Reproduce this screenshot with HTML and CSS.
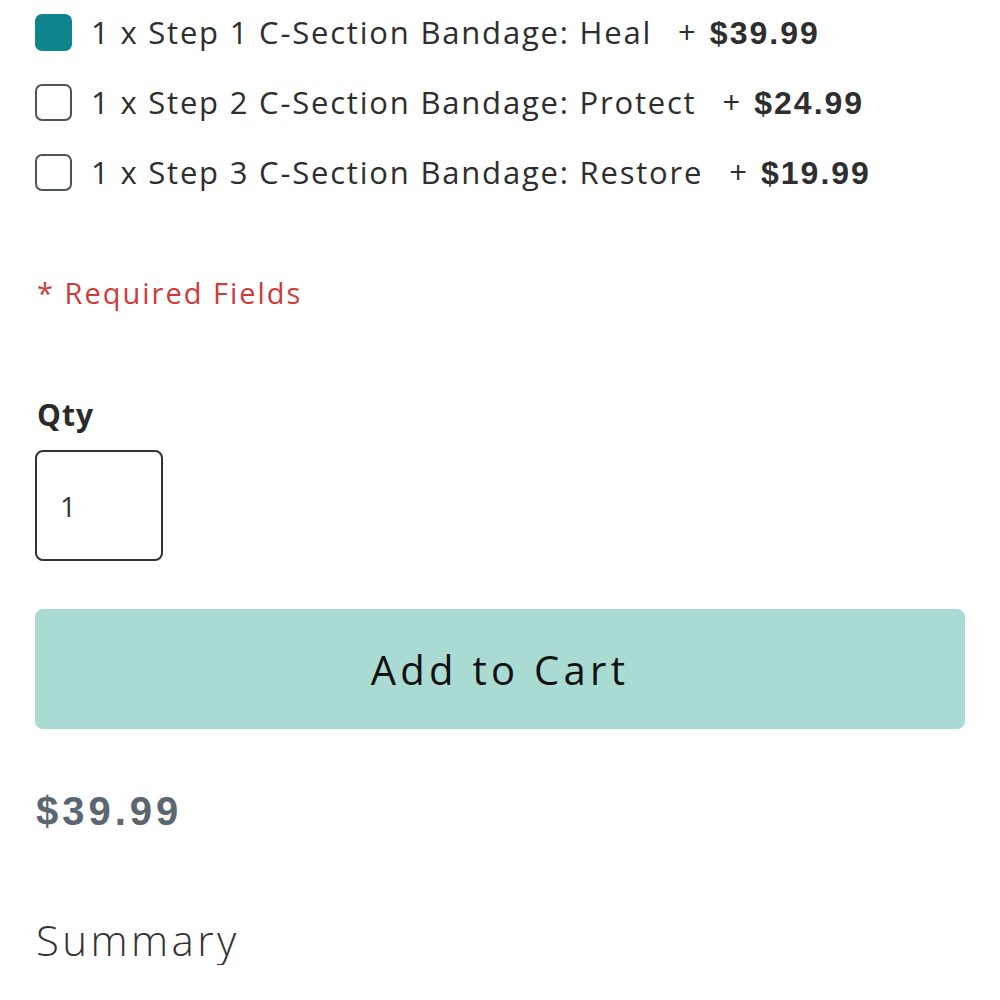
FILE: index.html
```html
<!DOCTYPE html>
<html>
<head>
<meta charset="utf-8">
<link rel="stylesheet" href="styles.css">
</head>
<body>
<div class="page">
  <div class="options">
    <label class="opt"><span class="box checked"></span><span class="opt-text">1 x Step 1 C-Section Bandage: Heal</span><span class="opt-price">+ <b>$39.99</b></span></label>
    <label class="opt"><span class="box"></span><span class="opt-text">1 x Step 2 C-Section Bandage: Protect</span><span class="opt-price">+ <b>$24.99</b></span></label>
    <label class="opt"><span class="box"></span><span class="opt-text">1 x Step 3 C-Section Bandage: Restore</span><span class="opt-price">+ <b>$19.99</b></span></label>
  </div>
  <div class="required">* Required Fields</div>
  <div class="qty-label">Qty</div>
  <div class="qty-input">1</div>
  <button class="add-btn">Add to Cart</button>
  <div class="price">$39.99</div>
  <div class="summary">Summary</div>
</div>
</body>
</html>
```
FILE: styles.css
```css
html, body {
  margin: 0;
  padding: 0;
  background: #ffffff;
}
body {
  font-family: "Open Sans", "Noto Sans", sans-serif;
  color: #333333;
}
.page {
  padding: 0 35px;
  display: flex;
  flex-direction: column;
  align-items: flex-start;
}
.options {
  display: flex;
  flex-direction: column;
  gap: 6px;
}
.opt {
  height: 64px;
  display: flex;
  align-items: center;
  font-size: 31px;
  letter-spacing: 1.8px;
  color: #2e2e2e;
  white-space: nowrap;
}
.box {
  width: 33px;
  height: 33px;
  border: 2px solid #4d5359;
  border-radius: 7px;
  margin-right: 19px;
  flex: none;
}
.box.checked {
  background: #0f858d;
  border-color: #0f858d;
}
.opt-price {
  margin-left: 26px;
  letter-spacing: 0;
  word-spacing: 6px;
}
.opt-price b {
  font-family: "Liberation Sans", Arial, sans-serif;
  font-weight: 700;
  font-size: 32px;
  letter-spacing: 2px;
  word-spacing: 0;
}
.required {
  margin-top: 69px;
  height: 40px;
  line-height: 40px;
  font-size: 29px;
  letter-spacing: 2px;
  color: #cf3b3a;
  padding-left: 2px;
}
.qty-label {
  margin-top: 82px;
  height: 40px;
  line-height: 40px;
  font-size: 30px;
  font-weight: 700;
  letter-spacing: 1px;
  color: #2a2a2a;
  padding-left: 2px;
}
.qty-input {
  margin-top: 15px;
  width: 124px;
  height: 107px;
  border: 2px solid #2f3338;
  border-radius: 8px;
  box-sizing: content-box;
  display: flex;
  align-items: center;
  font-size: 28px;
  color: #333;
  text-indent: 23px;
}
.add-btn {
  margin-top: 48px;
  width: 930px;
  height: 120px;
  border: none;
  border-radius: 8px;
  background: #a9dbd3;
  font-family: "Open Sans", "Noto Sans", sans-serif;
  font-size: 40px;
  color: #111111;
  letter-spacing: 4.3px;
  padding: 0;
}
.price {
  margin-top: 57px;
  height: 50px;
  line-height: 50px;
  font-family: "Liberation Sans", Arial, sans-serif;
  font-weight: 700;
  font-size: 40px;
  letter-spacing: 4px;
  color: #5b6670;
  padding-left: 1px;
}
.summary {
  margin-top: 79px;
  height: 50px;
  line-height: 50px;
  font-size: 42px;
  font-weight: 300;
  letter-spacing: 3.4px;
  color: #333333;
  padding-left: 1px;
}
```
